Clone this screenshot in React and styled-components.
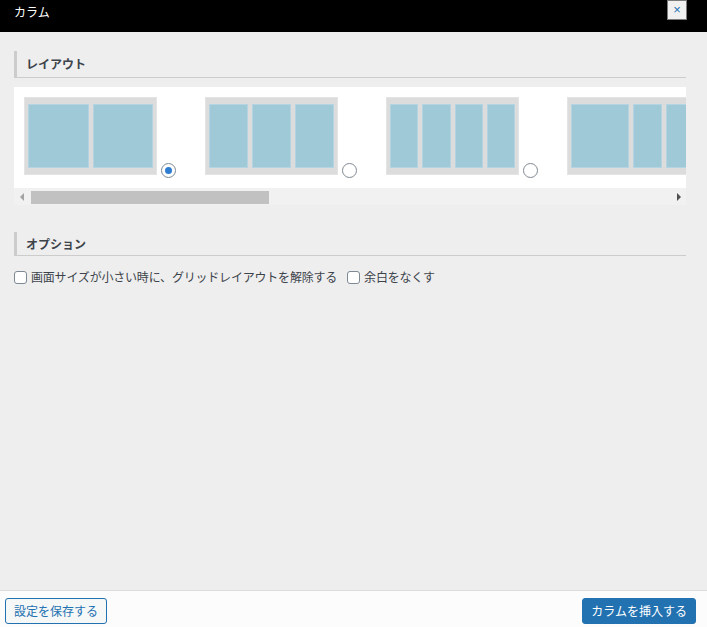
import React from 'react';
import styled, { createGlobalStyle } from 'styled-components';

const GlobalStyle = createGlobalStyle`
  html, body {
    margin: 0;
    padding: 0;
    background: #eeeeee;
    font-family: "Noto Sans CJK JP", "Liberation Sans", sans-serif;
    color: #3c434a;
  }
`;

// modal frame
const Modal = styled.div`
  height: 100vh;
  display: flex;
  flex-direction: column;
  overflow: hidden;
`;

const Header = styled.div`
  height: 32px;
  flex-shrink: 0;
  background: #000;
  display: flex;
  justify-content: space-between;
  align-items: flex-start;
  padding: 0 20px 0 14px;
`;

const Title = styled.h1`
  margin: 0;
  font-size: 12px;
  font-weight: 400;
  line-height: 24px;
  color: #fff;
`;

const CloseButton = styled.button`
  width: 20px;
  height: 20px;
  padding: 0;
  margin: 0;
  border: 1px solid #7a7a7a;
  background: #f0f0f0;
  color: #2271b1;
  font-family: "Liberation Sans", sans-serif;
  font-size: 13px;
  line-height: 16px;
  cursor: pointer;
`;

const Body = styled.div`
  flex: 1;
  padding: 19px 21px 0 14px;
`;

const SectionTitle = styled.h2`
  margin: 0 0 ${(p) => p.$gap}px;
  height: ${(p) => p.$h}px;
  line-height: ${(p) => p.$h}px;
  padding-left: 9px;
  border-left: 3px solid #cccccc;
  border-bottom: 1px solid #cccccc;
  font-size: 12px;
  font-weight: 700;
  color: #3c434a;
`;

// horizontal layout picker
const Picker = styled.div`
  margin-bottom: 27px;
`;

const Viewport = styled.div`
  background: #fff;
  overflow: hidden;
`;

const Track = styled.div`
  display: flex;
  width: max-content;
  padding: 10px;
`;

const Choice = styled.label`
  display: flex;
  align-items: flex-end;
  flex-shrink: 0;
  margin-right: 29px;
  cursor: pointer;

  &:last-child {
    margin-right: 0;
  }
`;

const Preview = styled.div`
  width: 133px;
  height: 78px;
  box-sizing: border-box;
  padding: 6px 3px;
  margin-bottom: 3px;
  background: #dcdcdc;
  border: 1px solid #e4e4e4;
  display: flex;
  gap: 4px;
`;

const Col = styled.div`
  flex: ${(p) => p.$span};
  background: #a0c9d8;
  border: 1px solid #b3d4e0;
`;

const Radio = styled.input.attrs({ type: 'radio' })`
  appearance: none;
  width: 15px;
  height: 15px;
  margin: 0 0 0 4px;
  border: 1px solid #7e8993;
  border-radius: 50%;
  background: #fff;
  display: grid;
  place-items: center;
  flex-shrink: 0;

  &:checked::before {
    content: '';
    width: 7px;
    height: 7px;
    border-radius: 50%;
    background: #2f7dd0;
  }
`;

const ScrollBar = styled.div`
  height: 17px;
  background: #f1f1f1;
  display: flex;
`;

const ScrollArrow = styled.div`
  width: 17px;
  flex-shrink: 0;
  display: flex;
  align-items: center;
  justify-content: center;

  &::before {
    content: '';
    border-top: 4px solid transparent;
    border-bottom: 4px solid transparent;
    ${(p) =>
      p.$dir === 'left'
        ? 'border-right: 4px solid #a3a3a3; margin-left: -2px;'
        : 'border-left: 4px solid #505050; margin-left: 2px;'}
  }
`;

const Rail = styled.div`
  flex: 1;
  padding: 3px 0 1px;
`;

const Thumb = styled.div`
  height: 100%;
  background: #c1c1c1;
`;

// options
const Options = styled.div`
  display: flex;
  align-items: center;
  gap: 10px;
`;

const CheckLabel = styled.label`
  display: inline-flex;
  align-items: center;
  gap: 4px;
  font-size: 12px;
  letter-spacing: -0.2px;
  line-height: 18px;
  color: #3c434a;
  cursor: pointer;
`;

const Check = styled.input.attrs({ type: 'checkbox' })`
  appearance: none;
  width: 13px;
  height: 13px;
  margin: 0;
  border: 1px solid #7e8993;
  border-radius: 3px;
  background: #fff;
`;

const Footer = styled.div`
  height: 37px;
  flex-shrink: 0;
  box-sizing: border-box;
  border-top: 1px solid #dddddd;
  background: #fcfcfc;
  padding: 7px 11px 0 5px;
  display: flex;
  justify-content: space-between;
  align-items: flex-start;
`;

const Button = styled.button`
  height: 26px;
  padding: 0 8px;
  border-radius: 3px;
  border: 1px solid #2271b1;
  background: ${(p) => (p.$primary ? '#2271b1' : '#f6f7f7')};
  color: ${(p) => (p.$primary ? '#fff' : '#2271b1')};
  font-family: inherit;
  font-size: 12px;
  line-height: 24px;
  cursor: pointer;
`;

const layouts = [
  [1, 1],
  [1, 1, 1],
  [1, 1, 1, 1],
  [2, 1, 1],
  [1, 2, 1],
  [1, 1, 2],
  [2, 1],
  [1, 2],
  [3, 1],
  [1, 3],
];

// visible width / total content width of the picker
const thumbRatio = 672 / 1801;

export default function App() {
  return (
    <>
      <GlobalStyle />
      <Modal>
        <Header>
          <Title>カラム</Title>
          <CloseButton aria-label="閉じる">×</CloseButton>
        </Header>
        <Body>
          <SectionTitle $h={26} $gap={9}>レイアウト</SectionTitle>
          <Picker>
            <Viewport>
              <Track>
                {layouts.map((cols, i) => (
                  <Choice key={i}>
                    <Preview>
                      {cols.map((span, j) => (
                        <Col key={j} $span={span} />
                      ))}
                    </Preview>
                    <Radio name="layout" defaultChecked={i === 0} />
                  </Choice>
                ))}
              </Track>
            </Viewport>
            <ScrollBar>
              <ScrollArrow $dir="left" />
              <Rail>
                <Thumb style={{ width: `${thumbRatio * 100}%` }} />
              </Rail>
              <ScrollArrow $dir="right" />
            </ScrollBar>
          </Picker>
          <SectionTitle $h={23} $gap={12}>オプション</SectionTitle>
          <Options>
            <CheckLabel>
              <Check />
              画面サイズが小さい時に、グリッドレイアウトを解除する
            </CheckLabel>
            <CheckLabel>
              <Check />
              余白をなくす
            </CheckLabel>
          </Options>
        </Body>
        <Footer>
          <Button>設定を保存する</Button>
          <Button $primary>カラムを挿入する</Button>
        </Footer>
      </Modal>
    </>
  );
}
